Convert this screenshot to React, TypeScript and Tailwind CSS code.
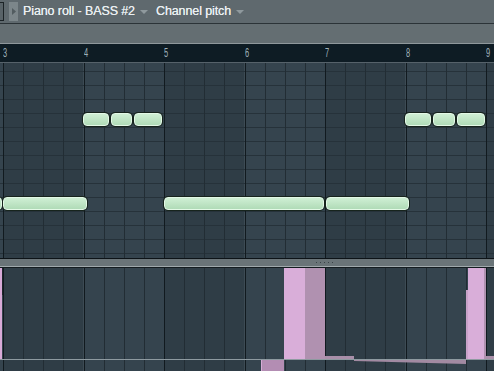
import React from 'react'

const BAR = 80.5
const ORIGIN = 3
const barX = (k: number) => ORIGIN + BAR * k

// bars -1..7 relative to bar 3
const bars = Array.from({ length: 9 }, (_, i) => i - 1)

const lowerNotes: [number, number][] = [
  [-10, 2],
  [3, 87],
  [164, 324],
  [326, 409],
]
const upperNotes: [number, number][] = [
  [83, 109],
  [111, 132],
  [134, 162],
  [405, 431],
  [433, 455],
  [457, 485],
]

function GridBackground({ height, rows }: { height: number; rows: boolean }) {
  const beats: number[] = []
  for (let k = -4; k < 28; k++) beats.push(ORIGIN + (BAR / 4) * k)
  const rowLines: number[] = []
  if (rows) for (let y = 8; y < height; y += 14) rowLines.push(y)
  return (
    <svg width={494} height={height} className="block">
      {bars.map((b) => (
        <rect
          key={b}
          x={barX(b)}
          y={0}
          width={BAR}
          height={height}
          fill={b % 2 === 0 ? '#2f3d46' : '#35444e'}
        />
      ))}
      {rowLines.map((y) => (
        <rect key={y} x={0} y={y} width={494} height={1} fill="#26323a" />
      ))}
      {beats.map((x, i) => (
        <rect
          key={i}
          x={Math.round(x)}
          y={0}
          width={1}
          height={height}
          fill={i % 4 === 0 ? '#111a1f' : '#222d34'}
        />
      ))}
    </svg>
  )
}

function Note({ x1, x2, top }: { x1: number; x2: number; top: number }) {
  return (
    <div
      className="absolute h-[13px] rounded-[4px] border border-[#e3f8e6] bg-gradient-to-b from-[#cfefd4] to-[#b0dbb7] shadow-[0_0_0_1px_#17241d]"
      style={{ left: x1, width: x2 - x1, top }}
    />
  )
}

function Caret() {
  return (
    <svg width="8" height="5" viewBox="0 0 8 5" className="shrink-0">
      <path d="M0 0 H8 L4 4 Z" fill="#8f999d" />
    </svg>
  )
}

export default function App() {
  const ramp: number[] = []
  for (let x = 354; x < 466; x += 5) ramp.push(x)

  return (
    <div
      className="w-[494px] h-[371px] overflow-hidden flex flex-col bg-[#5f696e]"
      style={{ fontFamily: "'Liberation Sans', Arial, sans-serif" }}
    >
      {/* title bar */}
      <div className="h-[23px] flex items-center shrink-0">
        <div className="w-[4px] h-[19px] border border-l-0 border-[#1c2326] bg-[#596368]" />
        <div className="ml-[5px] w-[9px] h-[19px] bg-[#7c868a] flex items-center justify-center">
          <svg width="4" height="7" viewBox="0 0 4 7">
            <path d="M0 0 L4 3.5 L0 7 Z" fill="#525c60" />
          </svg>
        </div>
        <span className="ml-[5px] text-[12.5px] leading-none text-[#e9eff1] tracking-[-0.1px] [text-shadow:0_0_0.4px_#e9eff1]">
          Piano roll - BASS #2
        </span>
        <div className="ml-[5px] mt-[1px]">
          <Caret />
        </div>
        <span className="ml-[8px] text-[12.5px] leading-none text-[#e9eff1] tracking-[-0.1px] [text-shadow:0_0_0.4px_#e9eff1]">
          Channel pitch
        </span>
        <div className="ml-[5px] mt-[1px]">
          <Caret />
        </div>
      </div>
      <div className="h-px bg-[#2b3337] shrink-0" />
      <div className="h-[19px] bg-[#646e72] shrink-0" />
      <div className="h-px bg-[#8f989c] shrink-0" />

      {/* ruler */}
      <div className="relative h-[18px] bg-[#0e1c24] shrink-0">
        {['3', '4', '5', '6', '7', '8', '9'].map((n, i) => (
          <span
            key={n}
            className="absolute top-[3px] text-[12px] leading-none text-[#9fb1ba] origin-left scale-x-[0.62]"
            style={{ left: Math.round(barX(i)) }}
          >
            {n}
          </span>
        ))}
      </div>
      <div className="h-px bg-[#56626a] shrink-0" />

      {/* notes grid */}
      <div className="relative h-[195px] shrink-0 overflow-hidden">
        <GridBackground height={195} rows />
        {lowerNotes.map(([a, b]) => (
          <Note key={a} x1={a} x2={b} top={134} />
        ))}
        {upperNotes.map(([a, b]) => (
          <Note key={a} x1={a} x2={b} top={50} />
        ))}
      </div>

      {/* splitter */}
      <div className="h-px bg-[#0d1317] shrink-0" />
      <div className="h-[7px] bg-[#6a7478] shrink-0 flex items-center justify-center gap-[3px] pl-[154px]">
        {[0, 1, 2, 3, 4].map((d) => (
          <div key={d} className="w-px h-px bg-[#394246]" />
        ))}
      </div>
      <div className="h-px bg-[#a0a9ac] shrink-0" />
      <div className="h-px bg-[#141c20] shrink-0" />

      {/* event editor */}
      <div className="relative h-[103px] shrink-0 overflow-hidden">
        <GridBackground height={103} rows={false} />
        <svg width={494} height={103} className="absolute left-0 top-0">
          <rect x={0} y={0} width={2} height={91} fill="#d8aad8" />
          <rect x={2} y={0} width={1} height={27} fill="#1d262b" />
          <rect x={261} y={91} width={23} height={12} fill="#b38db3" />
          <rect x={261} y={91} width={1} height={12} fill="#d6acd6" />
          <rect x={284} y={0} width={21} height={91} fill="#d9aed9" />
          <rect x={305} y={0} width={20} height={91} fill="#b091b0" />
          <rect x={325} y={88} width={29} height={3} fill="#a98fa9" />
          <path d="M354 91 H466 V96 L354 93 Z" fill="#a28aa2" />
          {ramp.map((x) => (
            <rect key={x} x={x} y={91} width={2} height={1} fill="#d2b6d2" />
          ))}
          <rect x={466} y={22} width={2} height={69} fill="#c9a2c9" />
          <rect x={468} y={0} width={17} height={91} fill="#d9aed9" />
          <rect x={484} y={0} width={2} height={91} fill="#b091b0" />
          <rect x={486} y={88} width={8} height={3} fill="#a98fa9" />
          <rect x={0} y={91} width={494} height={1} fill="#8e9aa0" />
        </svg>
      </div>
    </div>
  )
}
